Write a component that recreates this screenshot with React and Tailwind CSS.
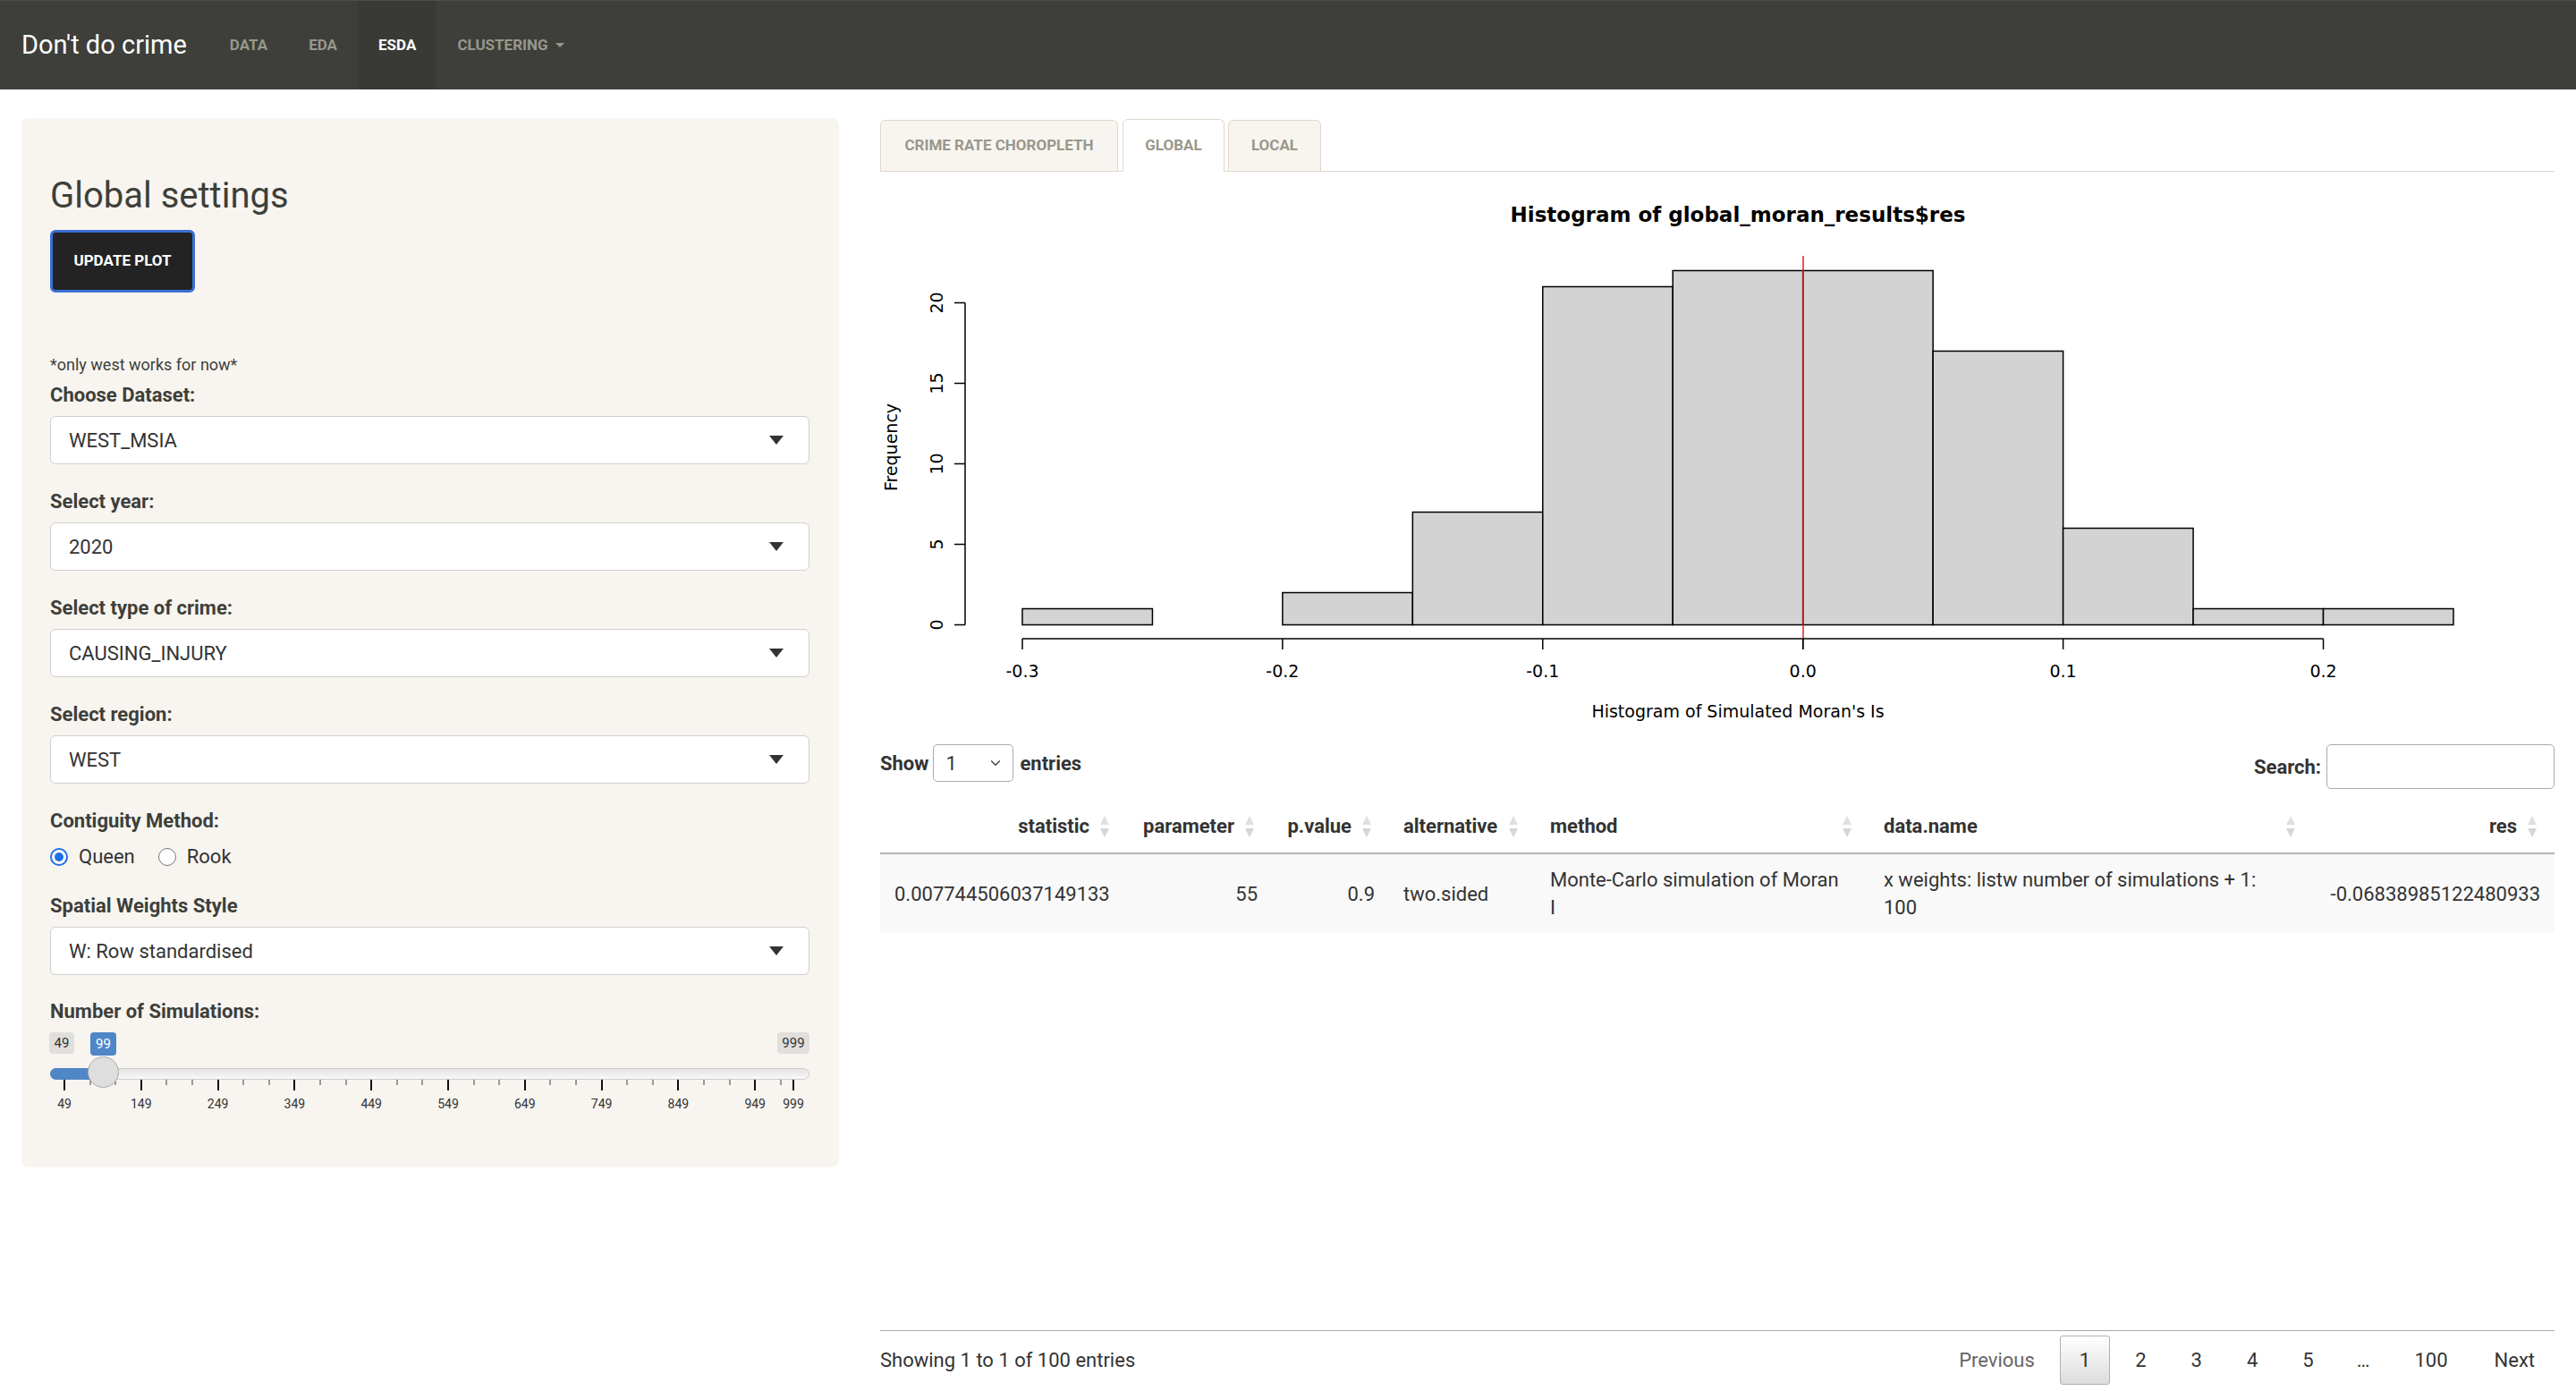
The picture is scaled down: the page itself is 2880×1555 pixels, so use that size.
import React from 'react';
import { ChevronDown } from 'lucide-react';

const counts = [1, 0, 2, 7, 21, 22, 22, 17, 6, 1, 1];
const X = (v) => 159 + (v + 0.3) * 2909;
const Y = (c) => 506.5 - c * 18;

const Histogram = () => {
  return (
    <svg width="100%" height="640" viewBox="0 0 1872 640" className="block" fontFamily="'DejaVu Sans', sans-serif">
      <text x="959" y="56" textAnchor="middle" fontSize="23" fontWeight="bold" fill="#000">
        Histogram of global_moran_results$res
      </text>
      {counts.map((c, i) => {
        const x0 = X(-0.3 + i * 0.05);
        const x1 = X(-0.3 + (i + 1) * 0.05);
        return (
          <rect key={i} x={x0} y={Y(c)} width={x1 - x0} height={c * 18} fill="#d3d3d3" stroke="#000" strokeWidth="1.5" />
        );
      })}
      <line x1="1032" y1="94" x2="1032" y2="534" stroke="#e02020" strokeWidth="1.5" />
      {/* y axis */}
      <line x1="95" y1={Y(0)} x2="95" y2={Y(20)} stroke="#000" strokeWidth="1.5" />
      {[0, 5, 10, 15, 20].map((c) => (
        <g key={c}>
          <line x1="83" y1={Y(c)} x2="95" y2={Y(c)} stroke="#000" strokeWidth="1.5" />
          <text transform={`translate(70 ${Y(c)}) rotate(-90)`} textAnchor="middle" fontSize="19" fill="#000">
            {c}
          </text>
        </g>
      ))}
      <text transform="translate(19 308) rotate(-90)" textAnchor="middle" fontSize="19" fill="#000">
        Frequency
      </text>
      {/* x axis */}
      <line x1={X(-0.3)} y1="522" x2={X(0.2)} y2="522" stroke="#000" strokeWidth="1.5" />
      {['-0.3', '-0.2', '-0.1', '0.0', '0.1', '0.2'].map((t, i) => (
        <g key={t}>
          <line x1={X(-0.3 + i * 0.1)} y1="522" x2={X(-0.3 + i * 0.1)} y2="534" stroke="#000" strokeWidth="1.5" />
          <text x={X(-0.3 + i * 0.1)} y="565" textAnchor="middle" fontSize="19" fill="#000">
            {t}
          </text>
        </g>
      ))}
      <text x="959" y="610" textAnchor="middle" fontSize="19" fill="#000">
        Histogram of Simulated Moran's Is
      </text>
    </svg>
  );
};

const Select = ({ value }) => (
  <div className="mt-[7px] h-[54px] rounded-[6px] border border-[#cfcfcf] bg-white flex items-center justify-between pl-[20px] pr-[28px] text-[22px] text-[#333]">
    <span>{value}</span>
    <span className="w-0 h-0 border-l-[8px] border-r-[8px] border-t-[10px] border-l-transparent border-r-transparent border-t-[#333]" />
  </div>
);

const Label = ({ children, className = '' }) => (
  <div className={`text-[22px] leading-[33px] font-bold text-[#3e3f3a] ${className}`}>{children}</div>
);

const Slider = () => {
  const ticks = [];
  for (let j = 0; j <= 28; j++) {
    ticks.push({ x: 16 + j * 28.6, major: j % 3 === 0, label: j % 3 === 0 ? String(Math.round(49 + j * (100 / 3))) : null });
  }
  ticks.push({ x: 831, major: true, label: '999' });
  return (
    <div className="relative h-[100px]">
      <div className="absolute left-[-1px] top-[7px] h-[24px] w-[28px] rounded-[4px] bg-[#e0dfdc] text-[15px] leading-[24px] text-center text-[#333]">49</div>
      <div className="absolute left-[45px] top-[7px] h-[26px] w-[29px] rounded-[4px] bg-[#4f86c6] text-[15px] leading-[26px] text-center text-white">99</div>
      <div className="absolute right-0 top-[7px] h-[24px] w-[36px] rounded-[4px] bg-[#e0dfdc] text-[15px] leading-[24px] text-center text-[#333]">999</div>
      <div className="absolute left-0 right-0 top-[47px] h-[13px] rounded-full border border-[#cdcdcd] bg-gradient-to-b from-[#e4e4e4] to-[#f8f8f8]" />
      <div className="absolute left-0 w-[60px] top-[47px] h-[13px] rounded-l-full bg-[#4f86c6]" />
      {ticks.map((t, i) => (
        <React.Fragment key={i}>
          <div
            className={t.major ? 'absolute top-[60px] h-[12px] w-[2px] bg-[#111]' : 'absolute top-[60px] h-[6px] w-[2px] bg-[#999]'}
            style={{ left: t.x - 1 }}
          />
          {t.label && (
            <div className="absolute top-[79px] w-[40px] text-center text-[14px] leading-[16px] text-[#333]" style={{ left: t.x - 20 }}>
              {t.label}
            </div>
          )}
        </React.Fragment>
      ))}
      <div className="absolute left-[42px] top-[34px] h-[35px] w-[35px] rounded-full border border-[#aaa] bg-[#dedede]" />
    </div>
  );
};

const SortIcon = () => (
  <svg width="14" height="28" viewBox="0 0 14 28" className="absolute right-[18px] top-1/2 -translate-y-1/2">
    <polygon points="2,12 7,2 12,12" fill="#e0e0e0" />
    <polygon points="2,16 7,26 12,16" fill="#d6d6d6" />
  </svg>
);

const Th = ({ children, right }) => (
  <th className={`relative py-[14px] pl-[16px] pr-[42px] border-b-2 border-[#b4b4b4] text-[22px] leading-[31px] font-bold text-[#333] ${right ? 'text-right' : 'text-left'}`}>
    {children}
    <SortIcon />
  </th>
);

const Td = ({ children, right }) => (
  <td className={`py-[13px] px-[16px] align-middle text-[22px] leading-[31px] text-[#333] ${right ? 'text-right' : 'text-left'}`}>{children}</td>
);

const App = () => {
  return (
    <div className="min-h-screen bg-white font-[Roboto,sans-serif] text-[#3e3f3a]">
      <nav className="h-[100px] bg-[#3e3f3a] border-t border-[#554a45] flex items-stretch">
        <div className="pl-[24px] pr-[25px] flex items-center text-[29px] text-white">Don't do crime</div>
        <div className="flex items-stretch text-[17px] font-bold uppercase">
          <a className="px-[23px] flex items-center text-[#98978b]">DATA</a>
          <a className="px-[23px] flex items-center text-[#98978b]">EDA</a>
          <a className="px-[23px] flex items-center text-white bg-[#393a35]">ESDA</a>
          <a className="px-[23px] flex items-center text-[#98978b]">
            CLUSTERING
            <span className="ml-[8px] w-0 h-0 border-l-[5px] border-r-[5px] border-t-[5px] border-l-transparent border-r-transparent border-t-[#98978b]" />
          </a>
        </div>
      </nav>

      <div className="flex items-start px-[24px] pt-[32px] gap-[46px]">
        <div className="w-[914px] shrink-0 rounded-[8px] bg-[#f8f5f0] pt-[63px] pb-[58px] pl-[32px] pr-[33px]">
          <h3 className="text-[40px] leading-[48px] font-normal text-[#3e3f3a]">Global settings</h3>
          <button className="mt-[14px] h-[70px] w-[162px] rounded-[6px] border-[3px] border-[#3b6fd4] bg-[#232323] text-white text-[17px] font-bold">
            UPDATE PLOT
          </button>
          <div className="mt-[68px] text-[18px] leading-[26px]">*only west works for now*</div>
          <Label className="mt-[4px]">Choose Dataset:</Label>
          <Select value="WEST_MSIA" />
          <Label className="mt-[25px]">Select year:</Label>
          <Select value="2020" />
          <Label className="mt-[25px]">Select type of crime:</Label>
          <Select value="CAUSING_INJURY" />
          <Label className="mt-[25px]">Select region:</Label>
          <Select value="WEST" />
          <Label className="mt-[25px]">Contiguity Method:</Label>
          <div className="mt-[7px] h-[33px] flex items-center text-[22px] text-[#333]">
            <span className="h-[20px] w-[20px] rounded-full border-[2px] border-[#1f6fe5] bg-white flex items-center justify-center">
              <span className="h-[10px] w-[10px] rounded-full bg-[#1f6fe5]" />
            </span>
            <span className="ml-[12px]">Queen</span>
            <span className="ml-[26px] h-[20px] w-[20px] rounded-full border-[1.5px] border-[#767676] bg-white" />
            <span className="ml-[12px]">Rook</span>
          </div>
          <Label className="mt-[22px]">Spatial Weights Style</Label>
          <div className="mt-[2px]">
            <Select value="W: Row standardised" />
          </div>
          <Label className="mt-[24px]">Number of Simulations:</Label>
          <Slider />
        </div>

        <div className="flex-1 min-w-0">
          <div className="mt-[1px] flex items-end border-b border-[#dfd7ca] text-[17px] font-bold uppercase text-[#98978b]">
            <div className="w-[266px] h-[58px] -mb-px flex items-center justify-center rounded-t-[6px] border border-[#dfd7ca] bg-[#f8f5f0]">
              CRIME RATE CHOROPLETH
            </div>
            <div className="ml-[5px] w-[114px] h-[59px] -mb-px flex items-center justify-center rounded-t-[6px] border border-b-0 border-[#dfd7ca] bg-white">
              GLOBAL
            </div>
            <div className="ml-[4px] w-[104px] h-[58px] -mb-px flex items-center justify-center rounded-t-[6px] border border-[#dfd7ca] bg-[#f8f5f0]">
              LOCAL
            </div>
          </div>

          <Histogram />

          <div className="h-[50px] flex justify-between items-start text-[22px] text-[#333]">
            <div className="flex items-center h-[42px]">
              <span className="font-bold">Show</span>
              <div className="ml-[5px] h-[42px] w-[90px] rounded-[5px] border border-[#aaa] bg-white flex items-center justify-between pl-[13px] pr-[10px]">
                <span>1</span>
                <ChevronDown size={18} strokeWidth={1.5} className="text-[#333]" />
              </div>
              <span className="ml-[7px] font-bold">entries</span>
            </div>
            <div className="flex items-center h-[50px]">
              <span className="font-bold">Search:</span>
              <div className="ml-[6px] h-[50px] w-[255px] rounded-[5px] border border-[#aaa] bg-white" />
            </div>
          </div>

          <table className="mt-[12px] w-full table-fixed border-separate border-spacing-0">
            <colgroup>
              <col className="w-[276px]" />
              <col className="w-[162px]" />
              <col className="w-[131px]" />
              <col className="w-[164px]" />
              <col className="w-[373px]" />
              <col className="w-[496px]" />
              <col />
            </colgroup>
            <thead>
              <tr>
                <Th right>statistic</Th>
                <Th right>parameter</Th>
                <Th right>p.value</Th>
                <Th>alternative</Th>
                <Th>method</Th>
                <Th>data.name</Th>
                <Th right>res</Th>
              </tr>
            </thead>
            <tbody>
              <tr className="bg-[#f9f9f9]">
                <Td>0.007744506037149133</Td>
                <Td right>55</Td>
                <Td right>0.9</Td>
                <Td>two.sided</Td>
                <Td>
                  <span className="whitespace-nowrap">Monte-Carlo simulation of Moran</span>
                  <br />I
                </Td>
                <Td>
                  <span className="whitespace-nowrap">x weights: listw number of simulations + 1:</span>
                  <br />100
                </Td>
                <Td right>-0.06838985122480933</Td>
              </tr>
            </tbody>
          </table>

          <div className="mt-[444px] border-t border-[#aaa] pt-[5px] flex items-center justify-between text-[22px] text-[#333]">
            <span>Showing 1 to 1 of 100 entries</span>
            <div className="flex items-center gap-[6px]">
              <span className="px-[22px] h-[55px] flex items-center text-[#666]">Previous</span>
              <span className="px-[21px] h-[55px] flex items-center rounded-[3px] border border-[#b0b0b0] bg-gradient-to-b from-white to-[#dcdcdc]">1</span>
              <span className="px-[22px] h-[55px] flex items-center">2</span>
              <span className="px-[22px] h-[55px] flex items-center">3</span>
              <span className="px-[22px] h-[55px] flex items-center">4</span>
              <span className="px-[22px] h-[55px] flex items-center">5</span>
              <span className="px-[20px] h-[55px] flex items-center">…</span>
              <span className="px-[24px] h-[55px] flex items-center">100</span>
              <span className="px-[22px] h-[55px] flex items-center">Next</span>
            </div>
          </div>
        </div>
      </div>
    </div>
  );
};

export default App;
